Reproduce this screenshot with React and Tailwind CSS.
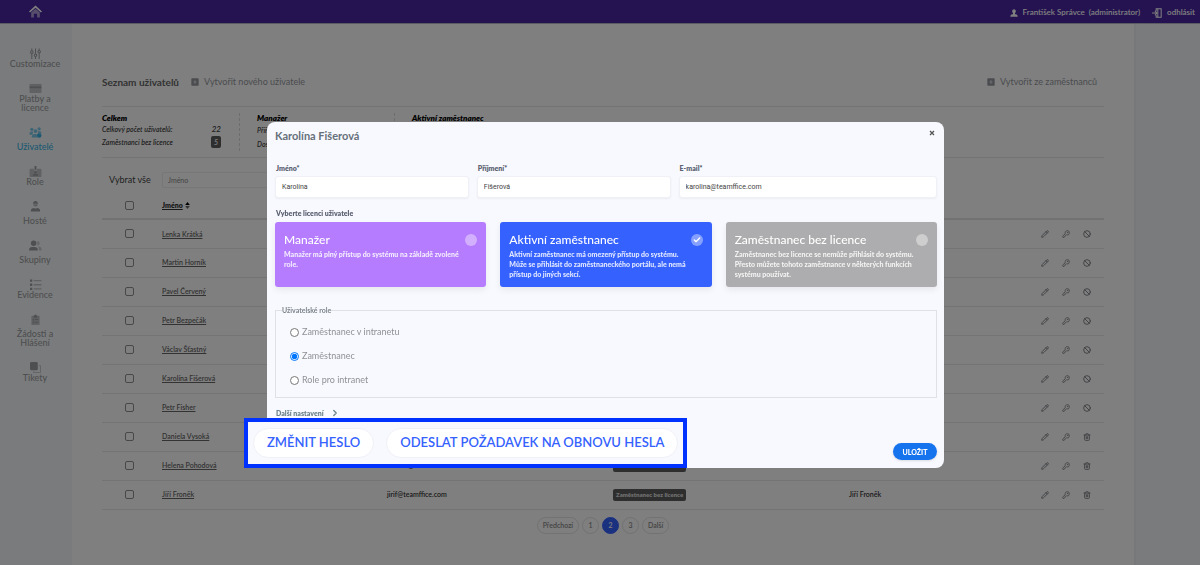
import { useState } from "react";
import { Ban, Check, ChevronRight, KeyRound, Pencil, Trash2 } from "lucide-react";

const menu = [
  { label: "Customizace", icon: "sliders" },
  { label: "Platby a licence", icon: "card" },
  { label: "Uživatelé", icon: "users", tall: true, active: true },
  { label: "Role", icon: "badge" },
  { label: "Hosté", icon: "guest", tall: true },
  { label: "Skupiny", icon: "group", tall: true },
  { label: "Evidence", icon: "list" },
  { label: "Žádosti a Hlášení", icon: "clipboard", tall: true },
  { label: "Tikety", icon: "copy" },
];

const users = [
  { name: "Lenka Krátká" },
  { name: "Martin Horník" },
  { name: "Pavel Červený" },
  { name: "Petr Bezpečák" },
  { name: "Václav Šťastný" },
  { name: "Karolína Fišerová" },
  { name: "Petr Fisher" },
  { name: "Daniela Vysoká", removable: true },
  { name: "Helena Pohodová", email: "helena@teamffice.com", removable: true },
  { name: "Jiří Froněk", email: "jirif@teamffice.com", removable: true },
];

const licences = [
  {
    id: "manager",
    title: "Manažer",
    text: "Manažer má plný přístup do systému na základě zvolené role.",
    color: "bg-[#b57cff]",
  },
  {
    id: "active",
    title: "Aktivní zaměstnanec",
    text: "Aktivní zaměstnanec má omezený přístup do systému. Může se přihlásit do zaměstnaneckého portálu, ale nemá přístup do jiných sekcí.",
    color: "bg-[#3562ff]",
  },
  {
    id: "none",
    title: "Zaměstnanec bez licence",
    text: "Zaměstnanec bez licence se nemůže přihlásit do systému. Přesto můžete tohoto zaměstnance v některých funkcích systému používat.",
    color: "bg-[#adadaf]",
  },
];

const roles = ["Zaměstnanec v intranetu", "Zaměstnanec", "Role pro intranet"];

const shapes = {
  sliders: (
    <g fill="none" stroke="currentColor" strokeWidth="2.2">
      <path d="M4 1v5M4 12v12M12 1v12M12 19v5M20 1v4M20 11v13" />
      <circle cx="4" cy="9" r="2.8" />
      <circle cx="12" cy="16" r="2.8" />
      <circle cx="20" cy="8" r="2.8" />
    </g>
  ),
  card: (
    <g>
      <path opacity=".6" d="M-1 2h26v5H-1z" />
      <path d="M-1 7h26v5H-1z" />
      <path opacity=".6" d="M-1 12h26v8a2 2 0 0 1-2 2H1a2 2 0 0 1-2-2z" />
    </g>
  ),
  users: (
    <g>
      <g opacity=".65">
        <circle cx="4" cy="5" r="3.5" />
        <circle cx="20" cy="4" r="3.5" />
        <path d="M-1 17v-3a4 4 0 0 1 4-4h4l-2 7zM17 9h4a4 4 0 0 1 4 4v1h-7z" />
        <circle cx="12" cy="9" r="4" />
        <path d="M4 23v-3a5 5 0 0 1 5-5h5l2 8z" />
      </g>
      <circle cx="20" cy="18.500" r="5" />
    </g>
  ),
  badge: (
    <g>
      <path opacity=".6" d="M9 6H1a2 2 0 0 0-2 2v14a2 2 0 0 0 2 2h22a2 2 0 0 0 2-2V8a2 2 0 0 0-2-2h-8v4H9z" />
      <path d="M10 0h4v8h-4zM6 21c0-3 2-4 6-4s6 1 6 4z" />
      <circle cx="12" cy="13.500" r="2.500" />
    </g>
  ),
  guest: (
    <g>
      <path d="M7 5c0-3 2-5 5-5s5 2 5 5l1 1H6z" />
      <path opacity=".7" d="M7 7h10a5 5 0 0 1-10 0z" />
      <path d="M2 23v-3c0-3 3-5 7-5l3 2 3-2c4 0 7 2 7 5v3z" />
    </g>
  ),
  group: (
    <g>
      <circle cx="8" cy="7" r="6" />
      <path d="M-2 23v-2c0-4 3-6 6-6h6c4 0 7 2 7 6v2z" />
      <path opacity=".5" d="M16 2a5 5 0 0 1 0 10zM18 14c5 0 7 3 7 6v3h-5z" />
    </g>
  ),
  list: (
    <g>
      <path d="M0 1h5v5H0zM0 10h5v5H0zM0 19h5v5H0z" />
      <path opacity=".6" d="M8 2h17v3H8zM8 11h17v3H8zM8 20h17v3H8z" />
    </g>
  ),
  clipboard: (
    <g>
      <path opacity=".6" d="M4 4h16a1 1 0 0 1 1 1v18a1 1 0 0 1-1 1H4a1 1 0 0 1-1-1V5a1 1 0 0 1 1-1z" />
      <path d="M8 3h2a2 2 0 0 1 4 0h2v5H8zM6 11h3v3H6zM6 17h3v3H6zM11 11h7v2h-7zM11 17h7v2h-7z" />
    </g>
  ),
  copy: (
    <g>
      <rect width="17" height="18" rx="3" />
      <path d="M20 8h3v15H8v-3" fill="none" stroke="currentColor" strokeWidth="2" opacity=".6" />
    </g>
  ),
  home: (
    <g>
      <path d="M12 1 0 12l2 2L12 5l10 9 2-2z" />
      <path opacity=".55" d="m12 7 8 7v8a1 1 0 0 1-1 1h-4v-7H9v7H5a1 1 0 0 1-1-1v-8z" />
    </g>
  ),
  user: <path d="M12 1a6 6 0 0 0-3 11v4H5l-4 4v3h22v-3l-4-4h-4v-4a6 6 0 0 0-3-11z" />,
  logout: (
    <g fill="none" stroke="currentColor" strokeWidth="2.500">
      <path d="M10 7V2h12v20H10v-5M0 12h12M7 7l5 5-5 5" />
      <path d="M14 2v20" />
    </g>
  ),
  plus: (
    <path
      fillRule="evenodd"
      d="M3 1h18a2 2 0 0 1 2 2v18a2 2 0 0 1-2 2H3a2 2 0 0 1-2-2V3a2 2 0 0 1 2-2zm8 6v4H7v2h4v4h2v-4h4v-2h-4V7z"
    />
  ),
};

const Icon = ({ name, className }) => (
  <svg viewBox="0 0 24 24" fill="currentColor" aria-hidden="true" className={`overflow-visible ${className}`}>
    {shapes[name]}
  </svg>
);

const Header = () => (
  <header className="flex h-6 items-center justify-between border-b border-[#b9b6c6] bg-[#4824a3] pr-[5px] pl-[29px] text-[8px] font-semibold text-white">
    <a href="#home" aria-label="Domů">
      <Icon name="home" className="size-[13px]" />
    </a>
    <div className="flex items-center gap-3 leading-3">
      <a href="#profile" className="flex items-center gap-[5px]">
        <Icon name="user" className="mt-0.5 size-2" />
        <span>František Správce&nbsp; (administrator)</span>
      </a>
      <a href="#logout" className="flex items-center gap-[5px]">
        <Icon name="logout" className="mt-0.5 size-[10px]" />
        odhlásit
      </a>
    </div>
  </header>
);

const Sidebar = () => (
  <nav className="flex w-[72px] shrink-0 flex-col items-center gap-[15px] bg-[#f5f7fa] pt-6 pr-0.5">
    {menu.map((item) => (
      <a
        key={item.label}
        href="#menu"
        className={`flex w-[54px] flex-col items-center text-center text-[9px] leading-[9px] font-medium ${
          item.tall ? "gap-1" : ""
        } ${item.active ? "text-[#3bb3e4]" : "text-[#9c9ea0]"}`}
      >
        <Icon name={item.icon} className="size-[11px]" />
        <span className={item.label.includes(" ") ? "w-10" : ""}>{item.label}</span>
      </a>
    ))}
  </nav>
);

const Stats = () => (
  <section className="flex h-[52px] border-y border-[#e8e8e8] pt-1.5 pb-1.5 text-[7px] font-semibold text-[#444] italic">
    <div className="w-[137px] pr-[18px]">
      <h2 className="text-[8px] leading-[10px] font-extrabold text-black">Celkem</h2>
      <p className="flex justify-between leading-[13px]">
        Celkový počet uživatelů: <span className="text-[8px]">22</span>
      </p>
      <p className="flex items-center justify-between leading-3">
        Zaměstnanci bez licence
        <span className="rounded-xs bg-[#5c5c5c] px-[3px] text-white">5</span>
      </p>
    </div>
    <div className="w-[155px] border-l border-dashed border-[#dadada] pl-[17px]">
      <h2 className="text-[8px] leading-[10px] font-extrabold text-black">Manažer</h2>
      <p className="leading-[14px]">Přiř.</p>
      <p className="leading-[14px]">Dost.</p>
    </div>
    <div className="border-l border-dashed border-[#dadada] pl-[17px]">
      <h2 className="text-[8px] leading-[10px] font-extrabold text-black">Aktivní zaměstnanec</h2>
    </div>
  </section>
);

const checkboxClass = "block size-[9px] appearance-none rounded-xs border border-[#909090] bg-white";

const UserTable = () => (
  <table className="mt-1 w-full table-fixed border-collapse text-left text-[7px] font-semibold text-[#666]">
    <thead>
      <tr className="h-[27px] border-b-2 border-[#e4e4e4]">
        <th className="w-[60px] pl-[23px]">
          <input type="checkbox" aria-label="Vybrat vše" className={checkboxClass} />
        </th>
        <th className="w-[225px] font-extrabold text-[#333]">
          <button type="button" className="flex items-center gap-0.5">
            <span className="underline">Jméno</span>
            <svg viewBox="0 0 8 12" className="h-[7px] w-[5px]" aria-hidden="true">
              <path d="M0 5 4 0l4 5z" fill="#000" />
              <path d="m0 7 4 5 4-5z" fill="#666" />
            </svg>
          </button>
        </th>
        <th className="w-[226px]" />
        <th className="w-[236px]" />
        <th />
        <th className="w-[66px]" />
      </tr>
    </thead>
    <tbody>
      {users.map((user) => (
        <tr key={user.name} className="h-[29px] border-b border-[#e8e8e8]">
          <td className="pl-[23px]">
            <input type="checkbox" aria-label={user.name} className={checkboxClass} />
          </td>
          <td>
            <a href="#user" className="underline">{user.name}</a>
          </td>
          <td className="text-[#333]">{user.email}</td>
          <td>
            {user.email && (
              <span className="block w-fit rounded-xs bg-[#5c5c5c] px-[3px] text-[6px] leading-3 font-extrabold text-[#ddd]">
                Zaměstnanec bez licence
              </span>
            )}
          </td>
          <td className="text-[#333]">{user.email && user.name}</td>
          <td>
            <div className="flex gap-[13px] pl-[3px] text-[#85878c]">
              <button type="button" aria-label="Upravit">
                <Pencil className="size-2" strokeWidth={3} />
              </button>
              <button type="button" aria-label="Heslo">
                <KeyRound className="size-2" strokeWidth={2.5} />
              </button>
              <button type="button" aria-label={user.removable ? "Smazat" : "Zablokovat"}>
                {user.removable ? (
                  <Trash2 className="size-2" strokeWidth={3} />
                ) : (
                  <Ban className="size-2" strokeWidth={3} />
                )}
              </button>
            </div>
          </td>
        </tr>
      ))}
    </tbody>
  </table>
);

const Pagination = () => (
  <nav className="mt-[7px] flex justify-center gap-[3px] text-[7px] leading-[15px] font-semibold text-[#888]">
    {["Předchozí", "1", "2", "3", "Další"].map((page) => (
      <button
        key={page}
        type="button"
        className={`min-w-[17px] rounded-full border ${page.length > 1 ? "px-[5px]" : ""} ${
          page === "2" ? "border-[#3562ff] bg-[#3562ff] text-white" : "border-[#e4e4e4]"
        }`}
      >
        {page}
      </button>
    ))}
  </nav>
);

const Field = ({ id, label, type = "text", value }) => (
  <div>
    <label htmlFor={id} className="block pl-px text-[7px] leading-[10px] font-extrabold text-[#5c6272]">
      {label}
    </label>
    <input
      id={id}
      type={type}
      defaultValue={value}
      className="mt-[3px] block h-[22px] w-full rounded-[3px] border border-[#f0f1f7] bg-white px-1.5 font-[Roboto,sans-serif] text-[7px] text-[#444] shadow-xs"
    />
  </div>
);

const UserDialog = () => {
  const [licence, setLicence] = useState("active");
  const [role, setRole] = useState("Zaměstnanec");

  return (
    <div
      role="dialog"
      aria-labelledby="dialog-title"
      className="relative flex w-full max-w-[677px] flex-col rounded-lg bg-[#f8f9fe] pt-2 pr-[7px] pb-2 pl-2"
    >
      <div className="flex h-3 items-start justify-between">
        <h2 id="dialog-title" className="text-[11px] leading-3 font-bold text-[#66707a]">
          Karolína Fišerová
        </h2>
        <button type="button" aria-label="Zavřít" className="-mt-0.5 flex p-0.5 text-[#555]">
          <svg viewBox="0 0 6 6" className="size-[6px]" stroke="currentColor" strokeWidth="1.300">
            <path d="m1 1 4 4M5 1 1 5" />
          </svg>
        </button>
      </div>

      <div className="mt-[21px] grid grid-cols-[3fr_3fr_4fr] gap-2">
        <Field id="first-name" label="Jméno*" value="Karolína" />
        <Field id="last-name" label="Příjmení*" value="Fišerová" />
        <Field id="email" label="E-mail*" type="email" value="karolina@teamffice.com" />
      </div>

      <p className="mt-2.5 pl-px text-[7px] leading-[10px] font-extrabold text-[#5c6272]">
        Vyberte licenci uživatele
      </p>
      <div className="mt-1 grid grid-cols-3 gap-3.5">
        {licences.map((item) => (
          <label
            key={item.id}
            className={`block h-[65px] rounded-[3px] px-[9px] pt-[11px] text-white shadow-[0_3px_6px_rgba(0,0,0,0.07)] ${item.color}`}
          >
            <span className="flex items-center justify-between text-[12px] leading-[14px] font-medium">
              {item.title}
              <span className="flex size-3 items-center justify-center rounded-full bg-white/40">
                {licence === item.id && <Check className="size-2" strokeWidth={4} />}
              </span>
            </span>
            <input
              type="radio"
              name="licence"
              className="sr-only"
              checked={licence === item.id}
              onChange={() => setLicence(item.id)}
            />
            <span className="mt-[2px] block pr-2.5 text-[7px] leading-[10px] font-black text-white/85">
              {item.text}
            </span>
          </label>
        ))}
      </div>

      <fieldset className="mt-[18px] border border-[#dfe1e7] px-3.5 pt-[5px] pb-[5px]">
        <legend className="-ml-2 text-[7px] leading-[10px] font-bold text-[#7c848a]">
          Uživatelské role
        </legend>
        {roles.map((item) => (
          <label key={item} className="flex h-6 items-center gap-[3px] text-[9px] leading-3 text-[#8e9196]">
            <input
              type="radio"
              name="role"
              className="size-[9px]"
              checked={role === item}
              onChange={() => setRole(item)}
            />
            {item}
          </label>
        ))}
      </fieldset>

      <button
        type="button"
        className="mt-2.5 flex items-center gap-[6px] self-start pl-px text-[7px] leading-[10px] font-extrabold text-[#6c838d]"
      >
        Další nastavení
        <ChevronRight className="size-[10px]" strokeWidth={3} />
      </button>

      <button
        type="submit"
        className="mt-[25px] h-[17px] w-11 self-end rounded-full bg-[#1673ee] text-[7px] leading-[10px] font-black text-white shadow-sm"
      >
        ULOŽIT
      </button>

      <div className="absolute bottom-0 -left-[23px] flex gap-3 border-4 border-[#0032ff] bg-[#f8f9fe] px-[5px] py-1.5 text-[13px] font-semibold whitespace-nowrap text-[#3562ff]">
        <button type="button" className="h-[30px] rounded-full border border-[#f0f1f7] bg-white px-[13px]">
          ZMĚNIT HESLO
        </button>
        <button type="button" className="h-[30px] rounded-full border border-[#f0f1f7] bg-white px-[13px]">
          ODESLAT POŽADAVEK NA OBNOVU HESLA
        </button>
      </div>
    </div>
  );
};

export default function App() {
  return (
    <div className="flex min-h-screen flex-col bg-white font-[Lato,sans-serif]">
      <Header />
      <div className="flex flex-1">
        <Sidebar />
        <main className="min-w-0 flex-1 px-[30px] pt-[52px]">
          <div className="flex items-center text-[9px] leading-3 text-[#96989e]">
            <h1 className="mr-3 text-[10px] font-bold text-[#666]">Seznam uživatelů</h1>
            <a href="#new" className="flex items-center gap-[5px]">
              <Icon name="plus" className="size-2" />
              Vytvořit nového uživatele
            </a>
            <a href="#employees" className="mr-[7px] ml-auto flex items-center gap-[5px]">
              <Icon name="plus" className="size-2" />
              Vytvořit ze zaměstnanců
            </a>
          </div>
          <div className="mt-[18px]">
            <Stats />
          </div>
          <div className="mt-3.5 flex items-center pl-[7px]">
            <label htmlFor="filter" className="w-[53px] text-[9px] leading-4 text-[#444]">
              Vybrat vše
            </label>
            <input
              id="filter"
              placeholder="Jméno"
              className="h-4 w-[210px] rounded-xs border border-[#eee] px-[5px] text-[7px] placeholder:text-[#888]"
            />
          </div>
          <UserTable />
          <Pagination />
        </main>
        <aside className="w-[66px] shrink-0 border-l-2 border-[#eef0f3] bg-[#f5f7fa]" />
      </div>

      <div className="fixed inset-0 flex items-start justify-center bg-black/50 pt-[122px] pl-[11px]">
        <UserDialog />
      </div>
    </div>
  );
}
